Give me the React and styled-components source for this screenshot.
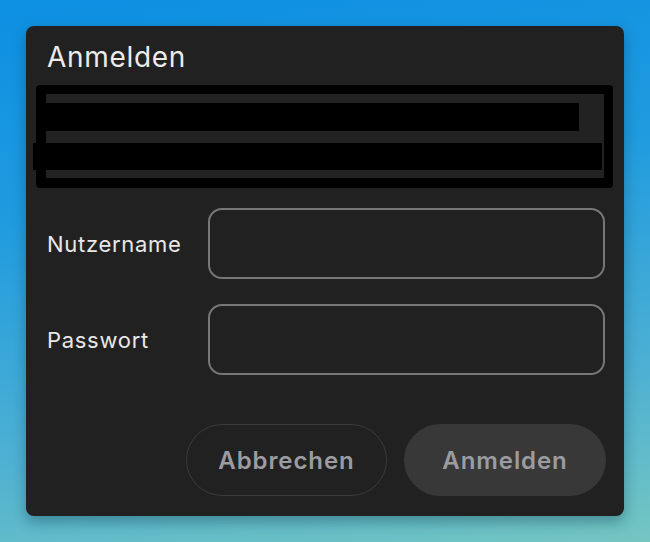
import React from "react";
import styled, { createGlobalStyle } from "styled-components";

const Global = createGlobalStyle`
  html, body {
    margin: 0;
    padding: 0;
    width: 650px;
    height: 542px;
    overflow: hidden;
  }
  body {
    background: linear-gradient(172deg, #0d8fe2 0%, #1f9bdf 35%, #4db0d3 72%, #74c6c1 100%);
    font-family: Inter, "Noto Sans", sans-serif;
  }
`;

const Page = styled.div`
  box-sizing: border-box;
  width: 650px;
  height: 542px;
  padding: 26px;
  display: flex;
`;

const Dialog = styled.div`
  box-sizing: border-box;
  width: 598px;
  height: 490px;
  background: #212121;
  border-radius: 8px;
  box-shadow: 0 6px 14px rgba(0, 40, 60, 0.35);
  padding: 14px 19px 20px 21px;
  display: flex;
  flex-direction: column;
`;

const Title = styled.h1`
  margin: 0;
  font-size: 28px;
  line-height: 34px;
  font-weight: 400;
  letter-spacing: 0.7px;
  color: #ececec;
`;

const Redacted = styled.div`
  margin: 11px -8px 0 -11px;
  height: 103px;
  box-sizing: border-box;
  background: #000;
  border-radius: 4px;
  padding: 9px 9px 10px 10px;
  display: flex;
`;

const RedactedInner = styled.div`
  flex: 1;
  background: #222222;
  padding: 9px 0 8px 0;
  display: flex;
  flex-direction: column;
  gap: 12px;
`;

const Bar = styled.div`
  background: #000;
  height: ${(p) => p.$h}px;
  margin-left: ${(p) => p.$ml}px;
  margin-right: ${(p) => p.$mr}px;
`;

const Form = styled.div`
  margin-top: 20px;
  display: flex;
  flex-direction: column;
  gap: 25px;
`;

const Row = styled.div`
  display: grid;
  grid-template-columns: 161px 1fr;
  align-items: center;
`;

const Label = styled.label`
  font-size: 22px;
  letter-spacing: 0.7px;
  color: #e8e8e8;
  font-weight: 400;
`;

const Input = styled.input`
  box-sizing: border-box;
  height: 71px;
  width: 397px;
  border: 2px solid #777777;
  border-radius: 14px;
  background: transparent;
  color: #eee;
  font-size: 20px;
  font-family: inherit;
  padding: 0 16px;
  outline: none;
`;

const Actions = styled.div`
  margin-top: auto;
  display: flex;
  justify-content: flex-end;
  gap: 17px;
  margin-right: -1px;
`;

const Button = styled.button`
  box-sizing: border-box;
  height: 72px;
  width: ${(p) => p.$w}px;
  border-radius: 36px;
  font-family: inherit;
  font-size: 24px;
  font-weight: 600;
  letter-spacing: 0.9px;
  color: #9a9ca1;
  border: 1.5px solid ${(p) => (p.$primary ? "#383838" : "#3b3b3b")};
  background: ${(p) => (p.$primary ? "#383838" : "transparent")};
  cursor: pointer;
`;

export default function App() {
  return (
    <>
      <Global />
      <Page>
        <Dialog>
          <Title>Anmelden</Title>
          <Redacted>
            <RedactedInner>
              <Bar $h={28} $ml={-10} $mr={25} />
              <Bar $h={27} $ml={-13} $mr={2} />
            </RedactedInner>
          </Redacted>
          <Form>
            <Row>
              <Label htmlFor="user">Nutzername</Label>
              <Input id="user" type="text" />
            </Row>
            <Row>
              <Label htmlFor="pass">Passwort</Label>
              <Input id="pass" type="password" />
            </Row>
          </Form>
          <Actions>
            <Button $w={201}>Abbrechen</Button>
            <Button $w={202} $primary>Anmelden</Button>
          </Actions>
        </Dialog>
      </Page>
    </>
  );
}
